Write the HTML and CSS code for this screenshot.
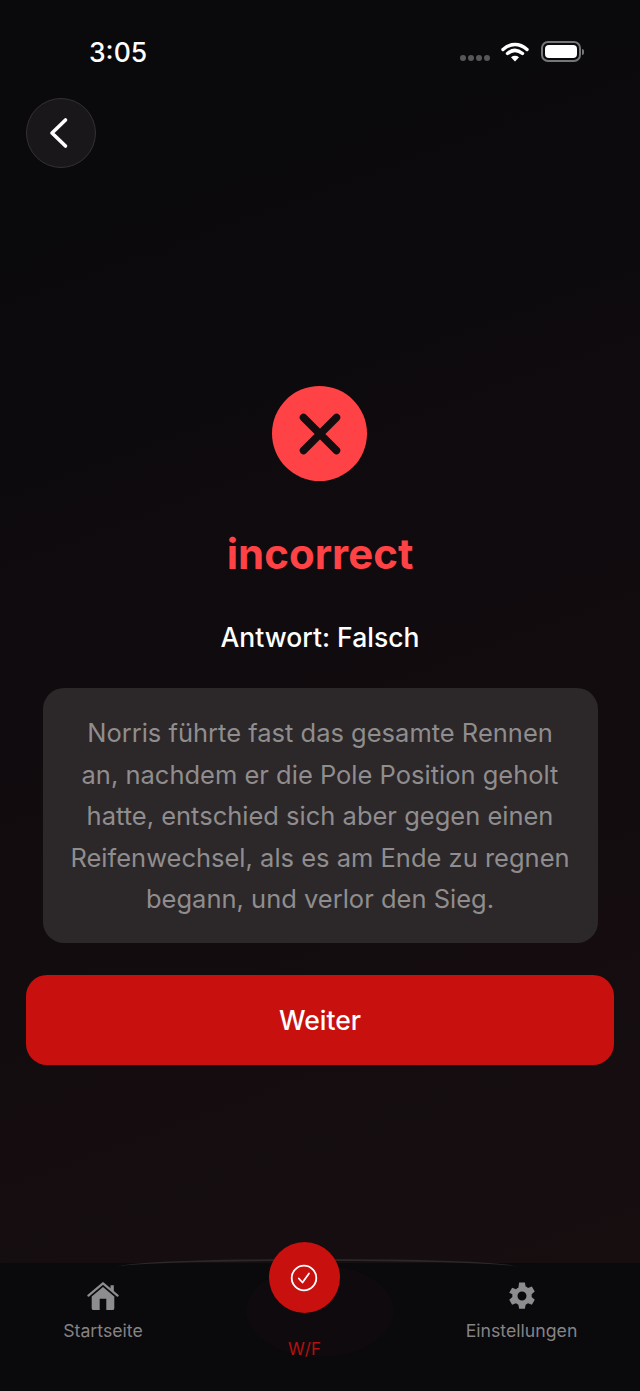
FILE: index.html
```html
<!DOCTYPE html>
<html lang="en">
<head>
    <meta charset="UTF-8">
    <meta name="viewport" content="width=device-width, initial-scale=1.0">
    <title>Antwort</title>
    <link rel="stylesheet" href="styles.css">
</head>
<body>
    <div class="screen">
        <header class="status-bar">
            <span class="time">3:05</span>
            <div class="status-icons">
                <div class="signal"><i></i><i></i><i></i><i></i></div>
                <svg class="wifi" width="28" height="20" viewBox="0 0 28 20">
                    <path d="M2 7.500C9.500.8 18.500.8 26 7.500M6.500 11.500C11.300 7.500 16.700 7.500 21.500 11.500" fill="none" stroke="#fff" stroke-width="3.400" stroke-linecap="round"/>
                    <path d="M10 15.200C12.500 13.400 15.500 13.400 18 15.200L14 19.500Z" fill="#fff"/>
                </svg>
                <div class="battery"><div class="battery-fill"></div></div>
                <div class="battery-cap"></div>
            </div>
        </header>

        <button class="back-btn" type="button" aria-label="Back">
            <svg width="24" height="32" viewBox="0 0 24 32">
                <path d="M18.500 3L5 16L18.500 29" fill="none" stroke="#fff" stroke-width="3.600" stroke-linecap="round" stroke-linejoin="round"/>
            </svg>
        </button>

        <main class="result">
            <div class="result-icon">
                <svg width="44" height="44" viewBox="0 0 44 44">
                    <path d="M5.500 5.500L38.500 38.500M38.500 5.500L5.500 38.500" fill="none" stroke="#140d10" stroke-width="7.500" stroke-linecap="round"/>
                </svg>
            </div>
            <h1 class="result-title">incorrect</h1>
            <p class="result-answer">Antwort: Falsch</p>
            <div class="explain">
                <p>Norris führte fast das gesamte Rennen an, nachdem er die Pole Position geholt hatte, entschied sich aber gegen einen Reifenwechsel, als es am Ende zu regnen begann, und verlor den Sieg.</p>
            </div>
            <button class="next-btn" type="button">Weiter</button>
        </main>

        <nav class="tab-bar">
            <div class="tab-arc"></div>
            <div class="tab-glow"></div>
            <a class="tab">
                <svg width="32" height="30" viewBox="0 0 34 30">
                    <path d="M1.500 14.500L17 1.500L32.500 14.500" fill="none" stroke="#8d8c8e" stroke-width="2.400" stroke-linecap="round" stroke-linejoin="round"/>
                    <path d="M25 3.500h3.500v7.500L25 8Z" fill="#8d8c8e"/>
                    <path fill-rule="evenodd" d="M17 5.500L29 15.500V28a2 2 0 0 1-2 2H7a2 2 0 0 1-2-2V15.500ZM13.500 18v12h7V18Z" fill="#8d8c8e"/>
                </svg>
                <span>Startseite</span>
            </a>
            <a class="tab tab-active">
                <div class="tab-fab">
                    <svg width="28" height="28" viewBox="0 0 28 28">
                        <circle cx="14" cy="14" r="12.300" fill="none" stroke="#fff" stroke-width="1.800"/>
                        <path d="M8.800 14.500L12.500 18.500L19 9.500" fill="none" stroke="#fff" stroke-width="1.800" stroke-linecap="round" stroke-linejoin="round"/>
                    </svg>
                </div>
                <span>W/F</span>
            </a>
            <a class="tab">
                <svg width="30" height="30" viewBox="0 0 24 24">
                    <path fill-rule="evenodd" fill="#8d8c8e" d="M9.700 0h4.600l.6 3.200c.7.300 1.300.6 1.900 1.100l3.100-1.100 2.300 4-2.500 2.100c.1.800.1 1.500 0 2.300l2.500 2.100-2.300 4-3.100-1.100c-.6.500-1.200.8-1.900 1.100l-.6 3.300H9.700l-.6-3.300c-.7-.3-1.300-.6-1.900-1.100l-3.100 1.100-2.300-4 2.500-2.100c-.1-.8-.1-1.500 0-2.300L1.800 8.200l2.300-4 3.100 1.100c.6-.5 1.200-.8 1.900-1.100ZM12 7.200a3.600 3.600 0 1 0 0 7.200 3.600 3.600 0 0 0 0-7.200Z" transform="translate(0 1.200)"/>
                </svg>
                <span>Einstellungen</span>
            </a>
        </nav>
    </div>
</body>
</html>
```

FILE: styles.css
```css
* {
    margin: 0;
    padding: 0;
    box-sizing: border-box;
}
html, body {
    height: 100%;
}
body {
    font-family: Inter, "Liberation Sans", sans-serif;
    background-color: #0a090c;
    color: #fff;
    overflow: hidden;
}
.screen {
    position: relative;
    height: 1391px;
    width: 640px;
    display: flex;
    flex-direction: column;
    background: linear-gradient(160deg, #0a090c 12%, #130c0f 60%, #170e0f 100%);
}

/* status bar */
.status-bar {
    height: 98px;
    display: flex;
    justify-content: space-between;
    align-items: flex-start;
    padding: 35px 56px 0 89px;
}
.time {
    font-size: 26.500px;
    line-height: 34px;
    font-weight: 500;
}
.status-icons {
    display: flex;
    align-items: center;
    margin-top: 6px;
}
.signal {
    display: flex;
    gap: 2px;
    margin: 13px 11px 0 0;
}
.signal i {
    width: 6px;
    height: 6px;
    border-radius: 50%;
    background-color: #58565a;
}
.wifi {
    margin-right: 12px;
}
.battery {
    width: 40px;
    height: 21px;
    border: 2px solid #77757a;
    border-radius: 7px;
    padding: 2px;
}
.battery-fill {
    height: 100%;
    background-color: #fff;
    border-radius: 4px;
}
.battery-cap {
    width: 2px;
    height: 6px;
    margin-left: 1px;
    background-color: #77757a;
    border-radius: 0 2px 2px 0;
}

/* back */
.back-btn {
    width: 70px;
    height: 70px;
    margin-left: 26px;
    border-radius: 50%;
    border: 1.500px solid #363033;
    background-color: #191719;
    display: flex;
    align-items: center;
    justify-content: center;
    flex-shrink: 0;
}
.back-btn svg {
    margin-right: 4px;
}

/* result */
.result {
    flex: 1;
    display: flex;
    flex-direction: column;
    align-items: center;
    padding: 218px 26px 0;
}
.result-icon {
    width: 95px;
    height: 95px;
    margin-left: -1px;
    border-radius: 50%;
    background-color: #ff4245;
    display: flex;
    align-items: center;
    justify-content: center;
}
.result-title {
    margin-top: 47px;
    font-size: 42px;
    line-height: 52px;
    font-weight: 700;
    color: #ff4245;
}
.result-answer {
    margin-top: 40px;
    font-size: 26.500px;
    line-height: 34px;
    font-weight: 550;
}
.explain {
    margin-top: 34px;
    width: 555px;
    height: 255px;
    padding: 24px 27px;
    border-radius: 21px;
    background-color: #2c2729;
    font-size: 25.500px;
    line-height: 41.500px;
    text-align: center;
    color: #8f8d8e;
}
.next-btn {
    margin-top: 32px;
    width: 588px;
    height: 90px;
    border: none;
    border-radius: 21px;
    background-color: #c8100f;
    color: #fff;
    font-family: inherit;
    font-size: 26.500px;
    font-weight: 550;
}

/* tab bar */
.tab-bar {
    position: relative;
    height: 128px;
    display: grid;
    grid-template-columns: 206px 1fr 237px;
    background-color: #0a090c;
}
.tab-arc {
    position: absolute;
    top: -4px;
    left: 118px;
    width: 398px;
    height: 30px;
    border-top: 2px solid #2b2829;
    border-radius: 50% 50% 0 0 / 8px 8px 0 0;
}
.tab-glow {
    position: absolute;
    top: 2px;
    left: 246px;
    width: 148px;
    height: 92px;
    border-radius: 50%;
    background-color: #0f0a0d;
}
.tab {
    position: relative;
    display: flex;
    flex-direction: column;
    align-items: center;
    padding-top: 18px;
    font-size: 17.700px;
    line-height: 22px;
    color: #858385;
}
.tab svg {
    display: block;
}
.tab span {
    margin-top: 9px;
}
.tab-active {
    color: #b5100f;
    font-size: 17px;
    padding-top: 66px;
}
.tab-fab {
    position: absolute;
    top: -21px;
    left: 50%;
    margin-left: -36px;
    width: 71px;
    height: 71px;
    border-radius: 50%;
    background-color: #c8100f;
    display: flex;
    align-items: center;
    justify-content: center;
}
```
